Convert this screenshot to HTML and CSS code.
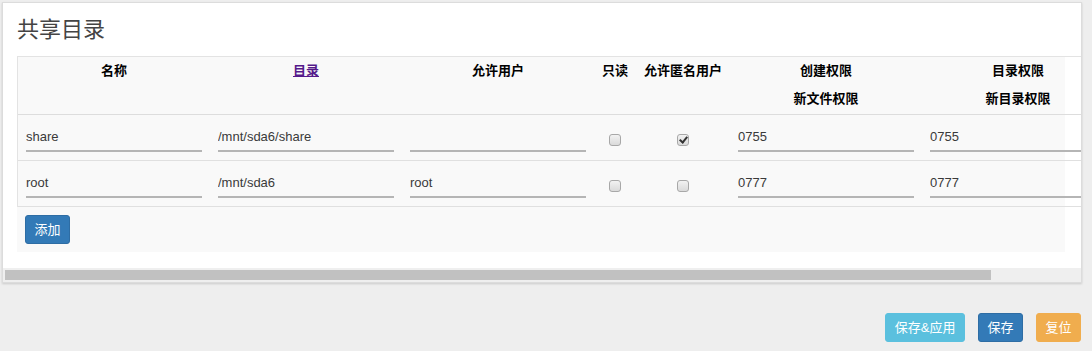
FILE: index.html
```html
<!DOCTYPE html>
<html lang="zh-CN">
<head>
<meta charset="utf-8">
<title>共享目录</title>
<link rel="stylesheet" href="styles.css">
</head>
<body>
<div class="wrap">
  <div class="panel">
    <h2 class="title">共享目录</h2>
    <div class="scroller">
      <div class="section">
        <table class="grid">
          <thead>
            <tr>
              <th class="c-text">名称</th>
              <th class="c-text"><a class="sort-link" href="#">目录</a></th>
              <th class="c-text">允许用户</th>
              <th class="c-ro">只读</th>
              <th class="c-anon">允许匿名用户</th>
              <th class="c-text">创建权限<br>新文件权限</th>
              <th class="c-text">目录权限<br>新目录权限</th>
              <th class="c-del"></th>
            </tr>
          </thead>
          <tbody>
            <tr>
              <td><input class="field" type="text" value="share"></td>
              <td><input class="field" type="text" value="/mnt/sda6/share"></td>
              <td><input class="field" type="text" value=""></td>
              <td class="center"><input class="check" type="checkbox"></td>
              <td class="center"><input class="check" type="checkbox" checked></td>
              <td><input class="field" type="text" value="0755"></td>
              <td><input class="field" type="text" value="0755"></td>
              <td></td>
            </tr>
            <tr>
              <td><input class="field" type="text" value="root"></td>
              <td><input class="field" type="text" value="/mnt/sda6"></td>
              <td><input class="field" type="text" value="root"></td>
              <td class="center"><input class="check" type="checkbox"></td>
              <td class="center"><input class="check" type="checkbox"></td>
              <td><input class="field" type="text" value="0777"></td>
              <td><input class="field" type="text" value="0777"></td>
              <td></td>
            </tr>
          </tbody>
        </table>
        <div class="add-row">
          <button class="btn btn-primary" type="button">添加</button>
        </div>
      </div>
    </div>
    <div class="hscroll">
      <div class="hscroll-thumb" style="width: 986px"></div>
    </div>
  </div>
  <div class="actions">
    <button class="btn btn-info" type="button">保存&amp;应用</button>
    <button class="btn btn-primary" type="button">保存</button>
    <button class="btn btn-warning" type="button">复位</button>
  </div>
</div>
</body>
</html>
```

FILE: styles.css
```css
* {
  box-sizing: border-box;
}

html, body {
  margin: 0;
  padding: 0;
  background: #eeeeee;
}

body {
  font-family: "Liberation Sans", "Noto Sans CJK SC", sans-serif;
  font-size: 13px;
  color: #333;
}

.wrap {
  padding: 2px 0 0 2px;
  width: 1082px;
}

.panel {
  width: 1080px;
  background: #fff;
  border: 1px solid #dcdcdc;
  box-shadow: 0 1px 2px rgba(0, 0, 0, 0.15);
}

.title {
  margin: 13px 0 12px 14px;
  font-size: 22px;
  font-weight: normal;
  line-height: 28px;
  color: #444;
}

.scroller {
  overflow: hidden;
  padding: 0 16px 16px 14px;
}

.hscroll {
  height: 14px;
  padding: 2px;
  background: #efefef;
}

.hscroll-thumb {
  height: 10px;
  background: #c1c1c1;
}

.section {
  background: #f9f9f9;
}

.grid {
  border-collapse: separate;
  border-spacing: 0;
  table-layout: fixed;
  width: 1142px;
  border-top: 1px solid #e3e3e3;
  border-left: 1px solid #e3e3e3;
}

.grid th {
  vertical-align: top;
  text-align: center;
  font-weight: bold;
  font-size: 13px;
  line-height: 28px;
  color: #000;
  padding: 0 8px 1px;
  border-bottom: 1px solid #dddddd;
  white-space: nowrap;
}

.c-text { width: 192px; }
.c-ro { width: 42px; }
.c-anon { width: 94px; }
.c-del { width: 45px; }

.sort-link {
  color: #551a8b;
  text-decoration: underline;
}

.grid td {
  height: 46px;
  padding: 0 8px;
  vertical-align: middle;
  border-bottom: 1px solid #e0e0e0;
}

.grid td.center {
  text-align: center;
}

.field {
  display: block;
  width: 100%;
  height: 28px;
  padding: 0;
  margin: 0;
  border: 0;
  border-bottom: 2px solid #b5b5b5;
  background: transparent;
  font-family: "Liberation Sans", "Noto Sans CJK SC", sans-serif;
  font-size: 13px;
  color: #3a3a3a;
  outline: none;
}

.check {
  appearance: none;
  -webkit-appearance: none;
  position: relative;
  display: inline-block;
  width: 12px;
  height: 12px;
  margin: 3px 0 0;
  border: 1px solid #a8a8a8;
  border-radius: 3px;
  background: linear-gradient(#f2f2f2, #dadada);
  vertical-align: middle;
}

.check:checked::after {
  content: "";
  position: absolute;
  left: 3px;
  top: 0px;
  width: 3px;
  height: 6px;
  border: solid #333;
  border-width: 0 2px 2px 0;
  transform: rotate(40deg);
}

.add-row {
  padding: 8px;
}

.btn {
  display: inline-block;
  height: 29px;
  padding: 0 8.5px;
  border: 1px solid transparent;
  border-radius: 3px;
  font-family: "Liberation Sans", "Noto Sans CJK SC", sans-serif;
  font-size: 13px;
  line-height: 27px;
  color: #fff;
  cursor: pointer;
}

.btn-primary {
  background: #337ab7;
  border-color: #2e6da4;
}

.btn-info {
  background: #5bc0de;
  border-color: #5bc0de;
}

.btn-warning {
  background: #f0ad4e;
  border-color: #f0ad4e;
}

.actions {
  display: flex;
  justify-content: flex-end;
  gap: 13px;
  margin-top: 30px;
  padding-right: 1px;
}
```
